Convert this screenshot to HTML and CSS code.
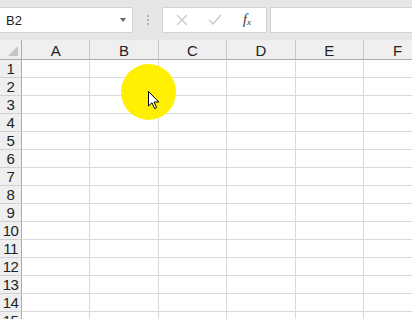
FILE: index.html
```html
<!DOCTYPE html>
<html lang="en">
<head>
    <meta charset="UTF-8">
    <title>Sheet</title>
    <link rel="stylesheet" href="styles.css">
</head>
<body>
    <div class="app">
        <div class="formula-bar">
            <div class="name-box">
                <span>B2</span>
                <span class="caret"></span>
            </div>
            <div class="grip"><i></i><i></i><i></i></div>
            <div class="fx-buttons">
                <svg width="12" height="12" viewBox="0 0 12 12"><path d="M1 1L11 11M11 1L1 11" stroke="#c8c8c8" stroke-width="1.3" fill="none"/></svg>
                <svg width="14" height="12" viewBox="0 0 14 12"><path d="M1 6L5 10L13 1" stroke="#c8c8c8" stroke-width="1.5" fill="none"/></svg>
                <span class="fx">f<sub>x</sub></span>
            </div>
            <div class="formula-input"></div>
        </div>

        <div class="sheet">
            <div class="corner"><span class="tri"></span></div>
            <div class="col-head">A</div>
            <div class="col-head">B</div>
            <div class="col-head">C</div>
            <div class="col-head">D</div>
            <div class="col-head">E</div>
            <div class="col-head">F</div>
        </div>
        <div class="sheet body" id="rows"></div>

        <div class="highlight"></div>
        <svg class="pointer" width="12" height="19" viewBox="0 0 12 19">
            <path d="M0.5 0.5L0.5 15L4 11.8L6.6 17.6L8.6 16.7L6.1 11L10.8 11Z" fill="#fff" stroke="#000" stroke-width="1" stroke-linejoin="round"/>
        </svg>
    </div>

    <script>
        // build rows 1..15
        const rows = document.getElementById('rows');
        for (let r = 1; r <= 15; r++) {
            const head = document.createElement('div');
            head.className = 'row-head';
            head.textContent = r;
            rows.appendChild(head);
            for (let c = 0; c < 6; c++) {
                const cell = document.createElement('div');
                cell.className = 'cell';
                rows.appendChild(cell);
            }
        }
    </script>
</body>
</html>
```

FILE: styles.css
```css
* {
    margin: 0;
    padding: 0;
    box-sizing: border-box;
}

body {
    font-family: 'Liberation Sans', Arial, sans-serif;
    background: #fff;
    overflow: hidden;
}

.app {
    position: relative;
    width: 412px;
    height: 319px;
    overflow: hidden;
}

.formula-bar {
    height: 40px;
    background: #e6e6e6;
    display: flex;
    align-items: flex-start;
    padding-top: 7px;
}

.name-box {
    width: 133px;
    height: 26px;
    background: #fff;
    border: 1px solid #d4d4d4;
    border-left: none;
    display: flex;
    align-items: center;
    justify-content: space-between;
    padding: 0 6px 0 6px;
    font-size: 13px;
    color: #222;
}

.caret {
    width: 0;
    height: 0;
    border-left: 3.5px solid transparent;
    border-right: 3.5px solid transparent;
    border-top: 4px solid #666;
}

.grip {
    width: 29px;
    height: 26px;
    display: flex;
    flex-direction: column;
    align-items: center;
    justify-content: center;
    gap: 2px;
}

.grip i {
    width: 2px;
    height: 2px;
    background: #b4b4b4;
}

.fx-buttons {
    width: 105px;
    height: 26px;
    background: #fff;
    border: 1px solid #d4d4d4;
    display: flex;
    align-items: center;
    padding-left: 13px;
    gap: 20px;
}

.fx {
    font-family: 'Liberation Serif', serif;
    font-style: italic;
    font-size: 14px;
    color: #333;
    margin-left: 1px;
}

.fx sub {
    font-size: 9px;
    vertical-align: -1px;
}

.formula-input {
    flex: 1;
    height: 26px;
    margin-left: 3px;
    background: #fff;
    border: 1px solid #d4d4d4;
    border-right: none;
}

.sheet {
    display: grid;
    grid-template-columns: 22px repeat(6, 68.4px);
}

.corner,
.col-head {
    height: 20px;
    background: #efefef;
    border-bottom: 1px solid #ababab;
    border-right: 1px solid #c8c8c8;
}

.corner {
    position: relative;
    border-right-color: #ababab;
}

.tri {
    position: absolute;
    right: 3px;
    bottom: 3px;
    width: 0;
    height: 0;
    border-left: 10px solid transparent;
    border-bottom: 10px solid #c4c4c4;
}

.col-head {
    font-size: 15px;
    color: #222;
    text-align: center;
    line-height: 21px;
}

.row-head {
    height: 18px;
    background: #efefef;
    border-right: 1px solid #ababab;
    border-bottom: 1px solid #d0d0d0;
    font-size: 15px;
    line-height: 18px;
    color: #222;
    text-align: center;
    letter-spacing: -0.5px;
}

.cell {
    height: 18px;
    border-right: 1px solid #d9d9d9;
    border-bottom: 1px solid #d9d9d9;
}

.highlight {
    position: absolute;
    left: 121px;
    top: 64px;
    width: 55px;
    height: 56px;
    border-radius: 50%;
    background: #ffef00;
}

.pointer {
    position: absolute;
    left: 148px;
    top: 91px;
}
```
